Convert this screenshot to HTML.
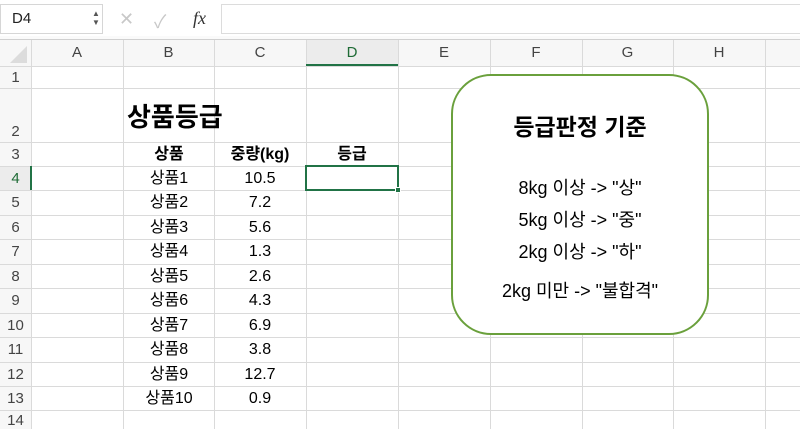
<!DOCTYPE html>
<html><head><meta charset="utf-8"><style>
*{margin:0;padding:0;box-sizing:border-box}
body{width:800px;height:429px;overflow:hidden;background:#fff;font-family:"Liberation Sans","Noto Sans CJK KR",sans-serif;position:relative;color:#000}
.a{position:absolute}
.vl{position:absolute;width:1px;background:#dadada;top:40px;bottom:0}
.hl{position:absolute;height:1px;background:#dadada;left:0;right:0}
.ch{position:absolute;top:40px;height:26px;line-height:26px;text-align:center;font-size:15px;color:#444}
.rh{position:absolute;left:0;width:31px;text-align:center;font-size:15px;color:#444;height:24px;line-height:24px}
.c{position:absolute;text-align:center;font-size:16px;width:92px;height:24px;line-height:24px}
.bl{position:absolute;left:451px;width:258px;text-align:center;font-size:18px;height:30px;line-height:30px}
</style></head><body>
<div class="a" style="left:0;top:0;width:800px;height:38px;background:#fff;border-bottom:1px solid #d0d0d0"></div>
<div class="a" style="left:0;top:36px;width:800px;height:4px;background:#fafafa;border-bottom:1px solid #d0d0d0"></div>
<div class="a" style="left:0;top:4px;width:103px;height:30px;border:1px solid #d6d6d6;background:#fff"></div>
<div class="a" style="left:12px;top:10px;font-size:15px;color:#222">D4</div>
<div class="a" style="left:92px;top:9px;font-size:8px;color:#555;line-height:9px">▲<br>▼</div>
<div class="a" style="left:119px;top:9px;font-size:18px;color:#c8c8c8">✕</div>
<div class="a" style="left:154px;top:8px;font-size:18px;color:#c8c8c8">✓</div>
<div class="a" style="left:193px;top:8px;font-size:18px;font-style:italic;font-family:'Liberation Serif',serif;color:#333">fx</div>
<div class="a" style="left:221px;top:4px;width:580px;height:30px;border:1px solid #dcdcdc;border-right:none"></div>
<div class="a" style="left:0;top:40px;width:800px;height:26px;background:#f7f7f7"></div>
<div class="a" style="left:0;top:40px;width:31px;height:389px;background:#f7f7f7"></div>
<div class="a" style="left:10px;top:46px;width:0;height:0;border-left:17px solid transparent;border-bottom:17px solid #dcdcdc"></div>
<div class="a" style="left:306px;top:40px;width:92px;height:26px;background:#ececec"></div>
<div class="a" style="left:0;top:166px;width:31px;height:24px;background:#ececec"></div>
<div class="vl" style="left:31px"></div>
<div class="vl" style="left:123px"></div>
<div class="vl" style="left:214px"></div>
<div class="vl" style="left:306px"></div>
<div class="vl" style="left:398px"></div>
<div class="vl" style="left:490px"></div>
<div class="vl" style="left:582px"></div>
<div class="vl" style="left:673px"></div>
<div class="vl" style="left:765px"></div>
<div class="hl" style="top:66px"></div>
<div class="hl" style="top:88px"></div>
<div class="hl" style="top:142px"></div>
<div class="hl" style="top:166px"></div>
<div class="hl" style="top:190px"></div>
<div class="hl" style="top:215px"></div>
<div class="hl" style="top:239px"></div>
<div class="hl" style="top:264px"></div>
<div class="hl" style="top:288px"></div>
<div class="hl" style="top:313px"></div>
<div class="hl" style="top:337px"></div>
<div class="hl" style="top:362px"></div>
<div class="hl" style="top:386px"></div>
<div class="hl" style="top:410px"></div>
<div class="ch" style="left:31px;width:92px">A</div>
<div class="ch" style="left:123px;width:91px">B</div>
<div class="ch" style="left:214px;width:92px">C</div>
<div class="ch" style="left:306px;width:92px;color:#1e6b35">D</div>
<div class="a" style="left:306px;top:64px;width:92px;height:2px;background:#217346"></div>
<div class="ch" style="left:398px;width:92px">E</div>
<div class="ch" style="left:490px;width:92px">F</div>
<div class="ch" style="left:582px;width:91px">G</div>
<div class="ch" style="left:673px;width:92px">H</div>
<div class="rh" style="top:66px">1</div>
<div class="rh" style="top:120px">2</div>
<div class="rh" style="top:143px">3</div>
<div class="rh" style="top:167px;color:#1e6b35">4</div>
<div class="a" style="left:30px;top:166px;width:2px;height:24px;background:#217346"></div>
<div class="rh" style="top:191px">5</div>
<div class="rh" style="top:216px">6</div>
<div class="rh" style="top:240px">7</div>
<div class="rh" style="top:265px">8</div>
<div class="rh" style="top:289px">9</div>
<div class="rh" style="top:314px">10</div>
<div class="rh" style="top:338px">11</div>
<div class="rh" style="top:363px">12</div>
<div class="rh" style="top:387px">13</div>
<div class="rh" style="top:409px">14</div>
<div class="a" style="left:127px;top:97px;font-size:26px;font-weight:bold">상품등급</div>
<div class="c" style="left:123px;top:143px;font-weight:bold">상품</div>
<div class="c" style="left:214px;top:143px;font-weight:bold">중량(kg)</div>
<div class="c" style="left:306px;top:143px;font-weight:bold">등급</div>
<div class="a" style="left:305px;top:165px;width:94px;height:26px;border:2px solid #217346"></div>
<div class="a" style="left:395px;top:187px;width:6px;height:6px;background:#217346;border:1px solid #fff"></div>
<div class="c" style="left:123px;top:167px">상품1</div><div class="c" style="left:214px;top:167px">10.5</div>
<div class="c" style="left:123px;top:191px">상품2</div><div class="c" style="left:214px;top:191px">7.2</div>
<div class="c" style="left:123px;top:216px">상품3</div><div class="c" style="left:214px;top:216px">5.6</div>
<div class="c" style="left:123px;top:240px">상품4</div><div class="c" style="left:214px;top:240px">1.3</div>
<div class="c" style="left:123px;top:265px">상품5</div><div class="c" style="left:214px;top:265px">2.6</div>
<div class="c" style="left:123px;top:289px">상품6</div><div class="c" style="left:214px;top:289px">4.3</div>
<div class="c" style="left:123px;top:314px">상품7</div><div class="c" style="left:214px;top:314px">6.9</div>
<div class="c" style="left:123px;top:338px">상품8</div><div class="c" style="left:214px;top:338px">3.8</div>
<div class="c" style="left:123px;top:363px">상품9</div><div class="c" style="left:214px;top:363px">12.7</div>
<div class="c" style="left:123px;top:387px">상품10</div><div class="c" style="left:214px;top:387px">0.9</div>
<div class="a" style="left:451px;top:74px;width:258px;height:261px;background:#fff;border:2px solid #6aa03c;border-radius:40px"></div>
<div class="bl" style="top:112px;font-size:23px;font-weight:bold">등급판정 기준</div>
<div class="bl" style="top:173px">8kg 이상 -&gt; "상"</div>
<div class="bl" style="top:205px">5kg 이상 -&gt; "중"</div>
<div class="bl" style="top:237px">2kg 이상 -&gt; "하"</div>
<div class="bl" style="top:276px">2kg 미만 -&gt; "불합격"</div>
</body></html>
